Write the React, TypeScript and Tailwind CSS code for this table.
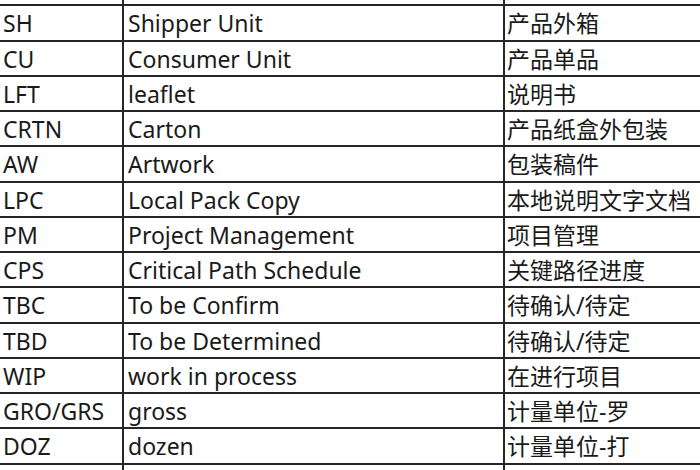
import React from "react";

const rows: [string, string, string][] = [
  ["MC", "Master Carton", "外箱"],
  ["SH", "Shipper Unit", "产品外箱"],
  ["CU", "Consumer Unit", "产品单品"],
  ["LFT", "leaflet", "说明书"],
  ["CRTN", "Carton", "产品纸盒外包装"],
  ["AW", "Artwork", "包装稿件"],
  ["LPC", "Local Pack Copy", "本地说明文字文档"],
  ["PM", "Project Management", "项目管理"],
  ["CPS", "Critical Path Schedule", "关键路径进度"],
  ["TBC", "To be Confirm", "待确认/待定"],
  ["TBD", "To be Determined", "待确认/待定"],
  ["WIP", "work in process", "在进行项目"],
  ["GRO/GRS", "gross", "计量单位-罗"],
  ["DOZ", "dozen", "计量单位-打"],
  ["FCL", "Full Container Load", "整箱货运运输"],
];

export default function App() {
  return (
    <div
      className="h-[470px] w-[700px] overflow-hidden bg-white text-[#1a1a1a]"
      style={{ fontFamily: '"Noto Sans", "Noto Sans CJK SC", sans-serif' }}
    >
      <div className="-mt-[29px] flex flex-col">
        {rows.map(([code, name, zh]) => (
          <div
            key={code}
            className="grid h-[35.25px] grid-cols-[124px_381px_1fr] border-b-2 border-[#262626]"
          >
            <div className="flex items-center border-r-2 border-[#262626] pl-[3px] pt-[2px] text-[23px] leading-none">
              {code}
            </div>
            <div className="flex items-center border-r-2 border-[#262626] pl-[4px] pt-[2px] text-[23px] leading-none">
              {name}
            </div>
            <div className="flex items-center pl-[2px] pt-[2px] text-[23px] leading-none">
              {zh}
            </div>
          </div>
        ))}
      </div>
    </div>
  );
}
